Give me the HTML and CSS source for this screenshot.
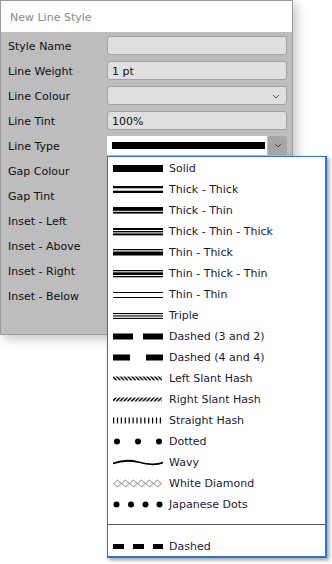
FILE: index.html
```html
<!DOCTYPE html>
<html lang="en">
<head>
    <meta charset="UTF-8">
    <title>New Line Style</title>
    <link rel="stylesheet" href="styles.css">
</head>
<body>
    <div class="dialog">
        <div class="title">New Line Style</div>
        <div class="form">
            <div class="row"><span class="label">Style Name</span><div class="field"></div></div>
            <div class="row"><span class="label">Line Weight</span><div class="field">1 pt</div></div>
            <div class="row"><span class="label">Line Colour</span>
                <div class="field combo">
                    <svg class="chev" width="8" height="5" viewBox="0 0 8 5"><path d="M1 1l3 3 3-3" fill="none" stroke="#555" stroke-width="1"/></svg>
                </div>
            </div>
            <div class="row"><span class="label">Line Tint</span><div class="field">100%</div></div>
            <div class="row"><span class="label">Line Type</span>
                <div class="select">
                    <div class="select-value"><span class="bar"></span></div>
                    <div class="select-btn">
                        <svg width="8" height="5" viewBox="0 0 8 5"><path d="M1 1l3 3 3-3" fill="none" stroke="#444" stroke-width="1"/></svg>
                    </div>
                    <div class="menu">
                        <div class="item"><svg class="sw" viewBox="0 0 50 11"><rect y="2" width="50" height="7"/></svg>Solid</div>
                        <div class="item"><svg class="sw" viewBox="0 0 50 11"><rect y="2" width="50" height="2.3"/><rect y="6.7" width="50" height="2.3"/></svg>Thick - Thick</div>
                        <div class="item"><svg class="sw" viewBox="0 0 50 11"><rect y="2" width="50" height="3.8"/><rect y="6.8" width="50" height="1.8"/></svg>Thick - Thin</div>
                        <div class="item"><svg class="sw" viewBox="0 0 50 11"><rect y="2" width="50" height="2"/><rect y="5" width="50" height="1.4"/><rect y="7.4" width="50" height="2"/></svg>Thick - Thin - Thick</div>
                        <div class="item"><svg class="sw" viewBox="0 0 50 11"><rect y="2" width="50" height="1.3"/><rect y="4.5" width="50" height="4"/></svg>Thin - Thick</div>
                        <div class="item"><svg class="sw" viewBox="0 0 50 11"><rect y="2" width="50" height="1.3"/><rect y="4.3" width="50" height="2.7"/><rect y="8" width="50" height="1.3"/></svg>Thin - Thick - Thin</div>
                        <div class="item"><svg class="sw" viewBox="0 0 50 11"><rect y="3" width="50" height="1"/><rect y="8" width="50" height="1"/></svg>Thin - Thin</div>
                        <div class="item"><svg class="sw" viewBox="0 0 50 11"><rect y="3" width="50" height="1.1"/><rect y="5.4" width="50" height="1.1"/><rect y="7.8" width="50" height="1.1"/></svg>Triple</div>
                        <div class="item"><svg class="sw" viewBox="0 0 50 11"><rect y="2.5" width="20" height="6"/><rect x="30" y="2.5" width="20" height="6"/></svg>Dashed (3 and 2)</div>
                        <div class="item"><svg class="sw" viewBox="0 0 50 11"><rect y="2.5" width="17" height="6"/><rect x="33" y="2.5" width="17" height="6"/></svg>Dashed (4 and 4)</div>
                        <div class="item"><svg class="sw" viewBox="0 0 50 11">
                            <defs><pattern id="lslant" width="3.8" height="11" patternUnits="userSpaceOnUse"><path d="M-1 2.5l5 5.5M2.8 2.5l5 5.5" stroke="#000" stroke-width="1.4"/></pattern></defs>
                            <rect y="3.5" width="49" height="4" fill="url(#lslant)"/></svg>Left Slant Hash</div>
                        <div class="item"><svg class="sw" viewBox="0 0 50 11">
                            <defs><pattern id="rslant" width="3.8" height="11" patternUnits="userSpaceOnUse"><path d="M-1 8l5-5.5M2.8 8l5-5.5" stroke="#000" stroke-width="1.4"/></pattern></defs>
                            <rect y="3.5" width="49" height="4" fill="url(#rslant)"/></svg>Right Slant Hash</div>
                        <div class="item"><svg class="sw" viewBox="0 0 50 11"><line x1="0" y1="5.5" x2="50" y2="5.5" stroke="#000" stroke-width="6" stroke-dasharray="1.2 2.7"/></svg>Straight Hash</div>
                        <div class="item"><svg class="sw" viewBox="0 0 50 11"><circle cx="4" cy="5.5" r="3"/><circle cx="25" cy="5.5" r="3"/><circle cx="46" cy="5.5" r="3"/></svg>Dotted</div>
                        <div class="item"><svg class="sw" viewBox="0 0 50 11"><path d="M0 6.5C8 3.5 16 2.8 25 5C34 7.5 42 9 50 5.5" fill="none" stroke="#000" stroke-width="1.8"/></svg>Wavy</div>
                        <div class="item"><svg class="sw" viewBox="0 0 50 11"><path d="M0.5 5.5l4-3.3 4 3.3-4 3.3zM8.5 5.5l4-3.3 4 3.3-4 3.3zM16.5 5.5l4-3.3 4 3.3-4 3.3zM24.5 5.5l4-3.3 4 3.3-4 3.3zM32.5 5.5l4-3.3 4 3.3-4 3.3zM40.5 5.5l4-3.3 4 3.3-4 3.3z" fill="#fff" stroke="#666" stroke-width="0.8"/></svg>White Diamond</div>
                        <div class="item"><svg class="sw" viewBox="0 0 50 11"><circle cx="3.5" cy="5.5" r="3"/><circle cx="18" cy="5.5" r="3"/><circle cx="32.5" cy="5.5" r="3"/><circle cx="46.5" cy="5.5" r="3"/></svg>Japanese Dots</div>
                        <div class="separator"></div>
                        <div class="item"><svg class="sw" viewBox="0 0 50 11"><rect y="3" width="11" height="5"/><rect x="20" y="3" width="11" height="5"/><rect x="40" y="3" width="10" height="5"/></svg>Dashed</div>
                    </div>
                </div>
            </div>
            <div class="row"><span class="label">Gap Colour</span></div>
            <div class="row"><span class="label">Gap Tint</span></div>
            <div class="row"><span class="label">Inset - Left</span></div>
            <div class="row"><span class="label">Inset - Above</span></div>
            <div class="row"><span class="label">Inset - Right</span></div>
            <div class="row"><span class="label">Inset - Below</span></div>
        </div>
    </div>
</body>
</html>
```

FILE: styles.css
```css
html, body {
    height: 100%;
}
body {
    margin: 0;
    min-height: 564px;
    background-color: #fff;
    font-family: "DejaVu Sans", Verdana, sans-serif;
    font-size: 11px;
    color: #111;
}
.dialog {
    width: 293px;
    box-sizing: border-box;
    border: 1px solid #9c9c9c;
    background-color: #bdbdbd;
    box-shadow: 4px 4px 10px rgba(0,0,0,0.22);
}
.title {
    height: 31px;
    background-color: #fff;
    color: #8a8a8a;
    font-size: 11px;
    line-height: 33px;
    padding-left: 9px;
}
.form {
    display: flex;
    flex-direction: column;
    gap: 6px;
    padding: 4px 0 29px 7px;
}
.row {
    display: flex;
    align-items: center;
    height: 19px;
}
.label {
    width: 99px;
    flex: none;
    padding-top: 2px;
}
.field {
    width: 180px;
    height: 19px;
    box-sizing: border-box;
    border: 1px solid #a2a2a2;
    border-radius: 3px;
    background-color: #e0e0e0;
    padding: 1px 0 0 4px;
    display: flex;
    align-items: center;
}
.combo {
    justify-content: flex-end;
    padding-right: 6px;
}
.select {
    position: relative;
    width: 180px;
    height: 19px;
    display: flex;
}
.select-value {
    width: 160px;
    background-color: #fff;
    display: flex;
    align-items: center;
    padding-left: 5px;
    box-sizing: border-box;
}
.bar {
    width: 153px;
    height: 7px;
    background-color: #000;
}
.select-btn {
    margin-left: 1px;
    flex: 1;
    background-color: #a6a6a6;
    border-radius: 0 3px 3px 0;
    display: flex;
    align-items: center;
    justify-content: center;
}
.menu {
    position: absolute;
    top: 20px;
    left: 0;
    width: 220px;
    box-sizing: border-box;
    border: 1px solid #2f74d0;
    border-width: 1px 2px 2px 1px;
    background-color: #fff;
    box-shadow: 2px 2px 4px rgba(0,0,0,0.4);
    z-index: 10;
    color: #1c1838;
}
.item {
    height: 21px;
    box-sizing: border-box;
    padding: 2px 0 0 5px;
    display: flex;
    align-items: center;
}
.sw {
    width: 50px;
    height: 11px;
    margin-right: 6px;
    flex: none;
}
.separator {
    height: 21px;
    display: flex;
    align-items: center;
}
.separator::before {
    content: "";
    flex: 1;
    height: 1px;
    background-color: #555;
}
```
